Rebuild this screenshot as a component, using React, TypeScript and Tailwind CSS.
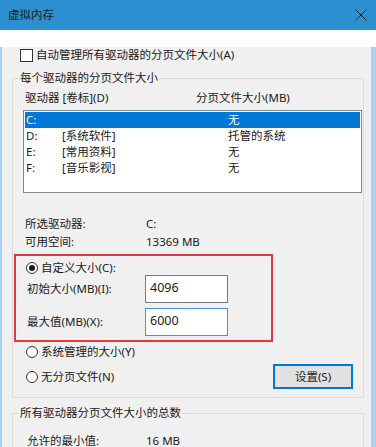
import React from "react";

const Radio = ({ checked = false }: { checked?: boolean }) => (
  <span className="w-[12px] h-[12px] rounded-full border border-[#333] bg-white flex items-center justify-center shrink-0">
    {checked && <span className="w-[6px] h-[6px] rounded-full bg-[#1a1a1a]" />}
  </span>
);

const drives = [
  { d: "C:", label: "", size: "无", selected: true },
  { d: "D:", label: "[系统软件]", size: "托管的系统" },
  { d: "E:", label: "[常用资料]", size: "无" },
  { d: "F:", label: "[音乐影视]", size: "无" },
];

export default function App() {
  return (
    <div
      className="w-[376px] h-[447px] overflow-hidden text-[11.5px] text-[#1a1a1a]"
      style={{ fontFamily: '"Noto Sans", "Noto Sans CJK SC", sans-serif' }}
    >
      {/* title bar */}
      <div className="h-[30px] bg-[#2b8fd0] flex items-center justify-between pl-[8px] pr-[8px]">
        <span className="leading-4">虚拟内存</span>
        <svg width="12" height="12" viewBox="0 0 12 12" className="mr-[1px]">
          <path d="M0.5 0.5L11.5 11.5M11.5 0.5L0.5 11.5" stroke="#1c1c1c" strokeWidth="1" />
        </svg>
      </div>

      <div className="h-[417px] bg-[#f0f0f0] border-l-2 border-r-[5px] border-[#a9d2ee] pl-[10px] pr-[7px]">
        <label className="flex items-center h-4 mt-[17px] ml-[8px]">
          <span className="w-[13px] h-[13px] border border-[#333] bg-white shrink-0" />
          <span className="ml-[3px] leading-4">自动管理所有驱动器的分页文件大小(A)</span>
        </label>

        {/* per-drive group */}
        <fieldset className="mt-[7px] border border-[#dcdcdc] pl-[10px] pr-[1px] pb-[8px]">
          <legend className="-ml-[4px] px-[1px] leading-4">每个驱动器的分页文件大小</legend>

          <div className="flex h-4 items-center mt-[4px] pl-[2px]">
            <span className="w-[171px]">驱动器 [卷标](D)</span>
            <span>分页文件大小(MB)</span>
          </div>

          <div className="mt-[4px] h-[83px] border border-[#828790] bg-white p-[1px]">
            {drives.map((r) => (
              <div
                key={r.d}
                className={`flex h-4 items-center pl-[1px] ${
                  r.selected ? "bg-[#0078d7] text-white" : ""
                }`}
              >
                <span className="w-[36px]">{r.d}</span>
                <span className="w-[166px]">{r.label}</span>
                <span>{r.size}</span>
              </div>
            ))}
          </div>

          <div className="mt-[22px] pl-[2px]">
            <div className="flex h-[18px] items-center">
              <span className="w-[121px]">所选驱动器:</span>
              <span>C:</span>
            </div>
            <div className="flex h-[18px] items-center">
              <span className="w-[121px]">可用空间:</span>
              <span>13369 MB</span>
            </div>
          </div>

          {/* highlighted custom size block */}
          <div className="mt-[3px] -ml-[9px] w-[259px] border-2 border-[#e2383e] pt-[4px] pb-[4px]">
            <div className="flex h-[15px] items-center pl-[10px]">
              <Radio checked />
              <span className="ml-[3px]">自定义大小(C):</span>
            </div>
            <div className="flex items-center h-[28px]">
              <span className="w-[129px] pl-[11px]">初始大小(MB)(I):</span>
              <div className="w-[83px] h-[28px] border border-[#7a7a7a] bg-white pl-[4px] pt-[4px] leading-4 text-[12.5px]">
                4096
              </div>
            </div>
            <div className="flex items-center h-[28px] mt-[5px]">
              <span className="w-[129px] pl-[11px]">最大值(MB)(X):</span>
              <div className="w-[83px] h-[28px] border border-[#3d9ad9] bg-white pl-[4px] pt-[4px] leading-4 text-[12.5px]">
                6000
              </div>
            </div>
          </div>

          <div className="flex h-4 items-center mt-[2px] pl-[3px]">
            <Radio />
            <span className="ml-[3px]">系统管理的大小(Y)</span>
          </div>
          <div className="flex h-[25px] items-center justify-between mt-[4px] pl-[3px]">
            <div className="flex items-center">
              <Radio />
              <span className="ml-[3px]">无分页文件(N)</span>
            </div>
            <button className="w-[80px] h-[25px] mr-[9px] border-2 border-[#0078d7] bg-[#e1e1e1] leading-4">
              设置(S)
            </button>
          </div>
        </fieldset>

        {/* totals group */}
        <fieldset className="mt-[7px] border border-[#dcdcdc] pl-[10px] pr-[1px] pb-[8px]">
          <legend className="-ml-[4px] px-[1px] leading-4">所有驱动器分页文件大小的总数</legend>
          <div className="flex h-4 items-center mt-[12px] pl-[4px] leading-4">
            <span className="w-[119px]">允许的最小值:</span>
            <span>16 MB</span>
          </div>
        </fieldset>
      </div>
    </div>
  );
}
